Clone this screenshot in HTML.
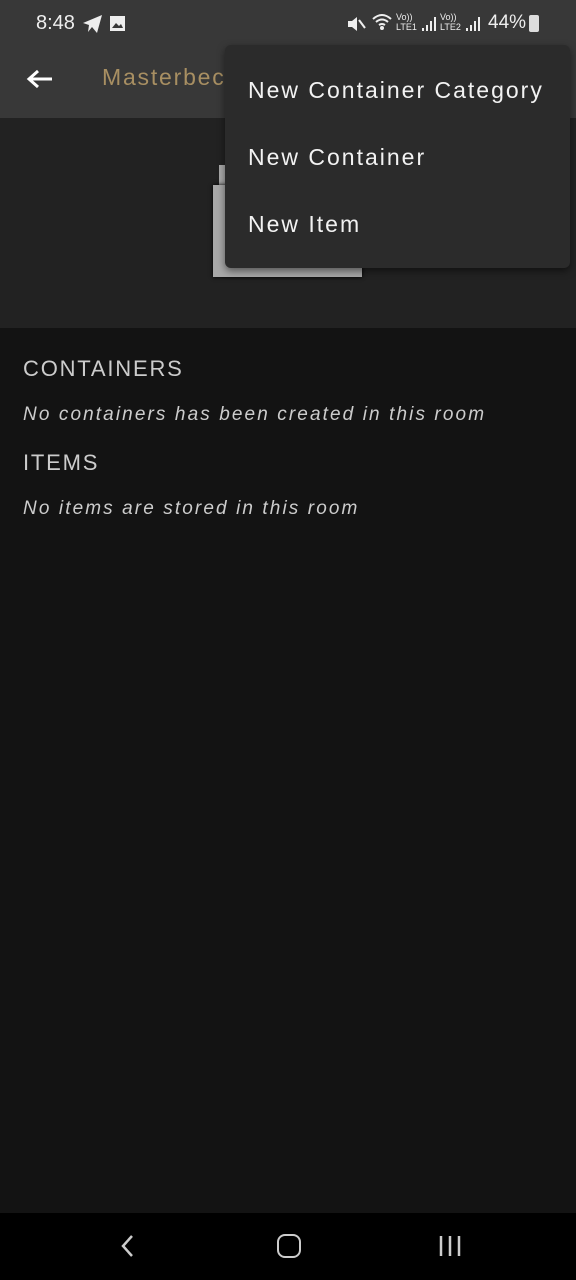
<!DOCTYPE html>
<html><head><style>
body{margin:0;width:576px;height:1280px;background:#131313;font-family:"Liberation Sans",sans-serif;position:relative;overflow:hidden;color:#ddd}
.abs{position:absolute;white-space:nowrap}
.m{font-size:23px;color:#f2f2f2;letter-spacing:2px}
.i{font-size:19px;font-style:italic;color:#ccc;letter-spacing:2.1px}
.h{font-size:22px;color:#ccc;letter-spacing:1.8px}
</style></head><body>
<div class="abs" style="left:0;top:0;width:576px;height:118px;background:#383838"></div>
<div class="abs" style="left:36px;top:12px;font-size:20px;color:#eee">8:48</div>
<svg class="abs" style="left:82px;top:14px" width="22" height="20" viewBox="0 0 22 20"><path d="M1 9 L20 1 L15 19 L10 13 L6 18 L7 11 Z" fill="#eee"/></svg>
<svg class="abs" style="left:109px;top:15px" width="17" height="17"><rect x="1" y="1" width="15" height="15" fill="#eee"/><path d="M3 13 L7 8 L10 11 L12 9 L14 13Z" fill="#383838"/></svg>
<svg class="abs" style="left:346px;top:14px" width="20" height="20"><path d="M2 7H6L11 3V17L6 13H2Z" fill="#eee"/><path d="M13 6L19 14" stroke="#eee" stroke-width="2"/></svg>
<svg class="abs" style="left:371px;top:12px" width="22" height="20"><path d="M2 7Q11 -1 20 7M5 10Q11 5 17 10M8 13Q11 11 14 13" stroke="#eee" stroke-width="2" fill="none"/><circle cx="11" cy="16" r="2" fill="#eee"/></svg>
<div class="abs" style="left:396px;top:12px;font-size:9px;color:#eee;line-height:10px">Vo))<br>LTE1</div>
<svg class="abs" style="left:421px;top:15px" width="16" height="18"><path d="M2 16V13M6 16V10M10 16V6M14 16V2" stroke="#eee" stroke-width="2"/></svg>
<div class="abs" style="left:440px;top:12px;font-size:9px;color:#eee;line-height:10px">Vo))<br>LTE2</div>
<svg class="abs" style="left:465px;top:15px" width="16" height="18"><path d="M2 16V13M6 16V10M10 16V6M14 16V2" stroke="#eee" stroke-width="2"/></svg>
<div class="abs" style="left:488px;top:12px;font-size:19px;color:#eee">44%</div>
<div class="abs" style="left:529px;top:15px;width:10px;height:17px;background:#ddd;border-radius:2px"></div>
<svg class="abs" style="left:26px;top:68px" width="28" height="22"><path d="M26 11 H3 M12 3 L3 11 L12 19" stroke="#fff" stroke-width="3" fill="none"/></svg>
<div class="abs" style="left:102px;top:64px;font-size:23px;color:#a88f62;letter-spacing:1.8px">Masterbec</div>
<div class="abs" style="left:0;top:118px;width:576px;height:210px;background:#222"></div>
<div class="abs" style="left:219px;top:165px;width:10px;height:20px;background:#aaa"></div>
<div class="abs" style="left:213px;top:185px;width:149px;height:92px;background:#a8a8a8;box-shadow:0 0 4px #000"></div>
<div class="abs" style="left:225px;top:45px;width:345px;height:223px;background:#2b2b2b;border-radius:6px;box-shadow:0 3px 8px rgba(0,0,0,.5)"></div>
<div class="abs m" style="left:248px;top:77px">New Container Category</div>
<div class="abs m" style="left:248px;top:144px">New Container</div>
<div class="abs m" style="left:248px;top:211px">New Item</div>
<div class="abs h" style="left:23px;top:356px">CONTAINERS</div>
<div class="abs i" style="left:23px;top:404px">No containers has been created in this room</div>
<div class="abs h" style="left:23px;top:450px">ITEMS</div>
<div class="abs i" style="left:23px;top:498px">No items are stored in this room</div>
<div class="abs" style="left:0;top:1213px;width:576px;height:67px;background:#000"></div>
<svg class="abs" style="left:118px;top:1233px" width="20" height="26"><path d="M14 3 L5 13 L14 23" stroke="#ccc" stroke-width="2.5" fill="none"/></svg>
<div class="abs" style="left:277px;top:1234px;width:20px;height:20px;border:2.5px solid #ccc;border-radius:8px"></div>
<svg class="abs" style="left:438px;top:1235px" width="26" height="22"><path d="M3 1V21M12 1V21M21 1V21" stroke="#ccc" stroke-width="2.5"/></svg>
</body></html>
